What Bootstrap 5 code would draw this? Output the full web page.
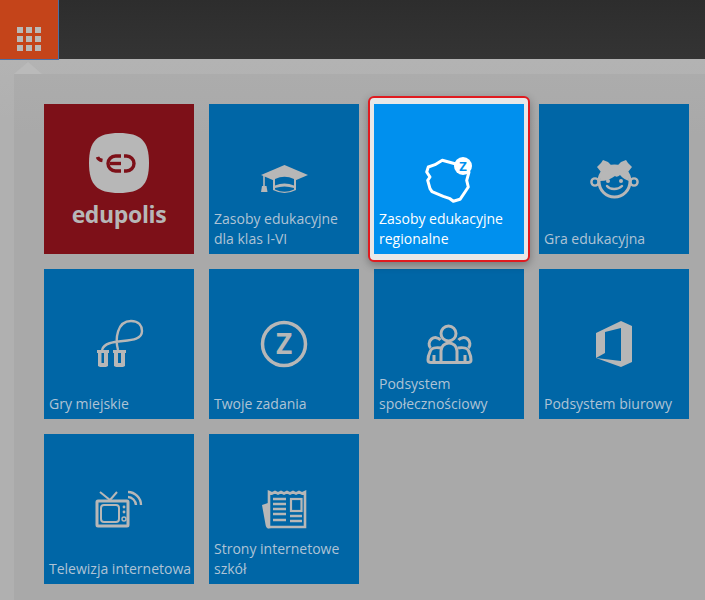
<!DOCTYPE html>
<html lang="pl">
<head>
<meta charset="UTF-8">
<title>Portal</title>
<link href="https://cdn.jsdelivr.net/npm/bootstrap@5.3.3/dist/css/bootstrap.min.css" rel="stylesheet">
<style>
html, body { height: 100%; overflow: hidden; }
body { background: linear-gradient(#b6b6b6, #b0b0b0 120px); font-family: "Open Sans", sans-serif; }
.top-bar { height: 59px; background: linear-gradient(#2d2d2d, #343434); }
.menu-btn { width: 59px; height: 60px; background: #c4441a; border: 0; border-right: 1px solid #4a6fa5; border-bottom: 1px solid #4a6fa5; padding: 18px 0 0 17px; }
.dots { display: grid; grid-template-columns: repeat(3, 6px); gap: 3px; }
.dots i { height: 6px; background: #b9b9b9; display: block; }
.panel-wrap { position: relative; margin: 15px 0 0 14px; background: linear-gradient(#acacac, #a9a9a9 60px); height: 526px; padding: 30px 0 0 30px; }
.panel-wrap::before { content: ""; position: absolute; left: 0; top: -12px; border: 14px solid transparent; border-top: 0; border-bottom: 12px solid #bababa; }
.tile-grid { display: grid; grid-template-columns: repeat(4, 150px); grid-auto-rows: 150px; gap: 15px; }
.tile { position: relative; background: #0066a6; color: #afc3d5; font-size: 14px; line-height: 20px; display: flex; flex-direction: column; padding: 50px 5px 5px; }
.tile svg { display: block; flex: none; margin: 0 auto; color: #b7b7b7; }
.tile-label { margin-top: auto; white-space: nowrap; }
.tile-logo { background: #7d1018; align-items: center; padding: 29px 0 0; }
.logo-square { width: 60px; height: 60px; flex: none; }
.logo-name { font-weight: 700; font-size: 23px; line-height: 26px; color: #b7b7b7; margin-top: 8px; letter-spacing: -.35px; }
.tile-active { background: #0090ee; color: #fff; z-index: 1; }
.tile-active svg { color: #fff; }
.tile-active::before { content: ""; position: absolute; z-index: -2; inset: -8px -6px; background: #e8e8e8; border: 2px solid #e01a1f; border-radius: 6px; box-shadow: 0 3px 8px rgba(0,0,0,.3); }
.tile-active::after { content: ""; position: absolute; z-index: -1; inset: 0; background: #0090ee; }
.tile text { font-family: "Open Sans", sans-serif; font-weight: 700; }
</style>
</head>
<body>
<header class="top-bar d-flex">
    <button class="menu-btn" type="button" aria-label="Menu">
        <span class="dots"><i></i><i></i><i></i><i></i><i></i><i></i><i></i><i></i><i></i></span>
    </button>
</header>
<main class="panel-wrap">
    <div class="tile-grid">
        <a class="tile tile-logo text-decoration-none">
            <svg class="logo-square" viewBox="0 0 60 60">
                <path fill="currentColor" d="M30 0C52 0 60 8 60 30S52 60 30 60 0 52 0 30 8 0 30 0Z"/>
                <g fill="none" stroke="#7d1018" stroke-width="3.400">
                    <path d="M32 23h-5.500a7.500 7.500 0 0 0 0 15H32"/>
                    <path d="M35 23h2.500a7.500 7.500 0 0 1 0 15H35"/>
                    <path d="M21 30.500h11"/>
                    <path d="M8.500 24c.5 2 2 3 5 3.500"/>
                </g>
            </svg>
            <span class="logo-name">edupolis</span>
        </a>
        <a class="tile text-decoration-none">
            <svg width="60" height="50" viewBox="0 0 60 50">
                <path fill="currentColor" d="M19 24V36Q30.500 42 42 36V24Z"/>
                <path fill="currentColor" d="M30.500 11 54 21 30.500 31 7 21Z"/>
                <path fill="#0066a6" d="M21 25Q30.500 20.500 40 25V31.500Q30.500 27.500 21 31.500Z"/>
                <path fill="#0066a6" d="M21 34Q30.500 31 40 34V35.500Q30.500 40 21 35.500Z"/>
                <path fill="none" stroke="currentColor" stroke-width="1.600" d="M10 21v11"/>
                <path fill="currentColor" d="M8 32h4.500l1 6H7Z"/>
            </svg>
            <span class="tile-label">Zasoby edukacyjne<br>dla klas I-VI</span>
        </a>
        <a class="tile tile-active text-decoration-none">
            <svg width="60" height="50" viewBox="0 0 60 50">
                <path fill="none" stroke="currentColor" stroke-width="3" stroke-linejoin="round" d="M23.300 6.300 36 9.700 50 18 47.700 26.300 49.300 33 46 38 41 45.300 34.300 47.300 31 44.700 24.300 42.300 13 37.700 11 34.700 8.700 26.300 11 23 7.700 18 9.300 13 16 10.700Z"/>
                <circle cx="44" cy="12" r="9" fill="currentColor"/>
                <text x="44" y="16.500" text-anchor="middle" font-size="13" fill="#0090ee">Z</text>
            </svg>
            <span class="tile-label">Zasoby edukacyjne<br>regionalne</span>
        </a>
        <a class="tile text-decoration-none">
            <svg width="60" height="50" viewBox="0 0 60 50">
                <circle cx="30.500" cy="27.500" r="15.500" fill="none" stroke="currentColor" stroke-width="3"/>
                <path fill="currentColor" d="M16 27c0-9 6-15 14.500-15S45 18 45 27c-3-1-7-3-9-6-2 2-4 2-5 1-4 3-9 5-15 5Z"/>
                <path fill="currentColor" d="M30 14 24 8 19 6 17 9 13 13 17 18 24 17ZM31 14 37 8 42 6 44 9 48 13 44 18 37 17Z"/>
                <circle cx="11" cy="28" r="3.600" fill="none" stroke="currentColor" stroke-width="2.400"/>
                <circle cx="50" cy="28" r="3.600" fill="none" stroke="currentColor" stroke-width="2.400"/>
                <circle cx="24" cy="27" r="2" fill="currentColor"/>
                <circle cx="37" cy="27" r="2" fill="currentColor"/>
                <path fill="none" stroke="currentColor" stroke-width="2.400" stroke-linecap="round" d="M23 32c3 4 11 4 15 0"/>
            </svg>
            <span class="tile-label">Gra edukacyjna</span>
        </a>
        <a class="tile text-decoration-none">
            <svg width="60" height="50" viewBox="0 0 60 50">
                <path fill="none" stroke="currentColor" stroke-width="2.400" d="M29 31C26 20 28 2 42 2 50 2 53 7 53 12 53 20 44 21 34 22 24 23 15 24 13 31"/>
                <path fill="currentColor" fill-rule="evenodd" d="M8 31h12v3h-1v13l-2 1h-6l-2-1V34H8ZM12.500 34v10h2.500V34Z"/>
                <path fill="currentColor" fill-rule="evenodd" d="M24 31h13v3h-1v13l-2 1h-7l-2-1V34h-1ZM29 34v10h3V34Z"/>
            </svg>
            <span class="tile-label">Gry miejskie</span>
        </a>
        <a class="tile text-decoration-none">
            <svg width="60" height="50" viewBox="0 0 60 50">
                <circle cx="30" cy="25" r="21.500" fill="none" stroke="currentColor" stroke-width="3.500"/>
                <text x="30" y="35" text-anchor="middle" font-size="28" fill="currentColor">Z</text>
            </svg>
            <span class="tile-label">Twoje zadania</span>
        </a>
        <a class="tile text-decoration-none">
            <svg width="60" height="50" viewBox="0 0 60 50">
                <g fill="none" stroke="currentColor" stroke-width="3" stroke-linejoin="round">
                    <circle cx="29.500" cy="14.500" r="7.500"/>
                    <path d="M11.500 29a6 6 0 1 1 10-8M49.500 29a6 6 0 1 0-10-8"/>
                    <path d="M22 43V32c0-5 4-8 8-8s8 3 8 8v11"/>
                    <path d="M22 29c-5-1-10 0-11 4-1 2-2 5-2 8 0 2 1 2.500 3 2.500h37c2 0 3-.5 3-2.500 0-3-1-6-2-8-1-4-6-5-11-4"/>
                    <path d="M15 36v7M46 36v7"/>
                </g>
            </svg>
            <span class="tile-label">Podsystem<br>społecznościowy</span>
        </a>
        <a class="tile text-decoration-none">
            <svg width="60" height="50" viewBox="0 0 60 50">
                <path fill="currentColor" fill-rule="evenodd" d="M12 14 37 2 48 7V43L37 48 12 39ZM37 9 21 13V34L12 39 37 42Z"/>
            </svg>
            <span class="tile-label">Podsystem biurowy</span>
        </a>
        <a class="tile text-decoration-none">
            <svg width="60" height="50" viewBox="0 0 60 50">
                <path fill="none" stroke="currentColor" stroke-width="2" d="M11 8l10 8 7-8"/>
                <rect x="8" y="17" width="31" height="25" rx="1" fill="none" stroke="currentColor" stroke-width="3"/>
                <rect x="12" y="21" width="18" height="17" rx="3" fill="none" stroke="currentColor" stroke-width="2"/>
                <circle cx="35" cy="23" r="1.400" fill="currentColor"/>
                <circle cx="35" cy="28" r="1.400" fill="currentColor"/>
                <circle cx="35" cy="35" r="2" fill="none" stroke="currentColor" stroke-width="1.400"/>
                <path fill="none" stroke="currentColor" stroke-width="2.400" d="M39 8c7 0 13 6 13 13M39 13c4 0 8 4 8 8"/>
            </svg>
            <span class="tile-label">Telewizja internetowa</span>
        </a>
        <a class="tile text-decoration-none">
            <svg width="60" height="50" viewBox="0 0 60 50">
                <path fill="currentColor" d="M8 21l6-2v22l3 3-3 .5c-1-.5-2-1.500-2.300-3Z"/>
                <path fill="none" stroke="currentColor" stroke-width="2.600" d="M15 8l3 1.500 3-1.500 3 1.500 3-1.500 3 1.500 3-1.500 3 1.500 3-1.500 3 1.500 3-1.500 3 1.500 3-1.500V43H15Z"/>
                <path fill="none" stroke="currentColor" stroke-width="2.400" d="M19 15h13M19 20h13M19 25h13M19 30h13M19 36h13M36 32h12M36 37h12"/>
                <rect x="37" y="15" width="10.500" height="12" fill="none" stroke="currentColor" stroke-width="2.200"/>
            </svg>
            <span class="tile-label">Strony internetowe<br>szkół</span>
        </a>
    </div>
</main>
<script src="https://cdn.jsdelivr.net/npm/bootstrap@5.3.3/dist/js/bootstrap.bundle.min.js"></script>
</body>
</html>
